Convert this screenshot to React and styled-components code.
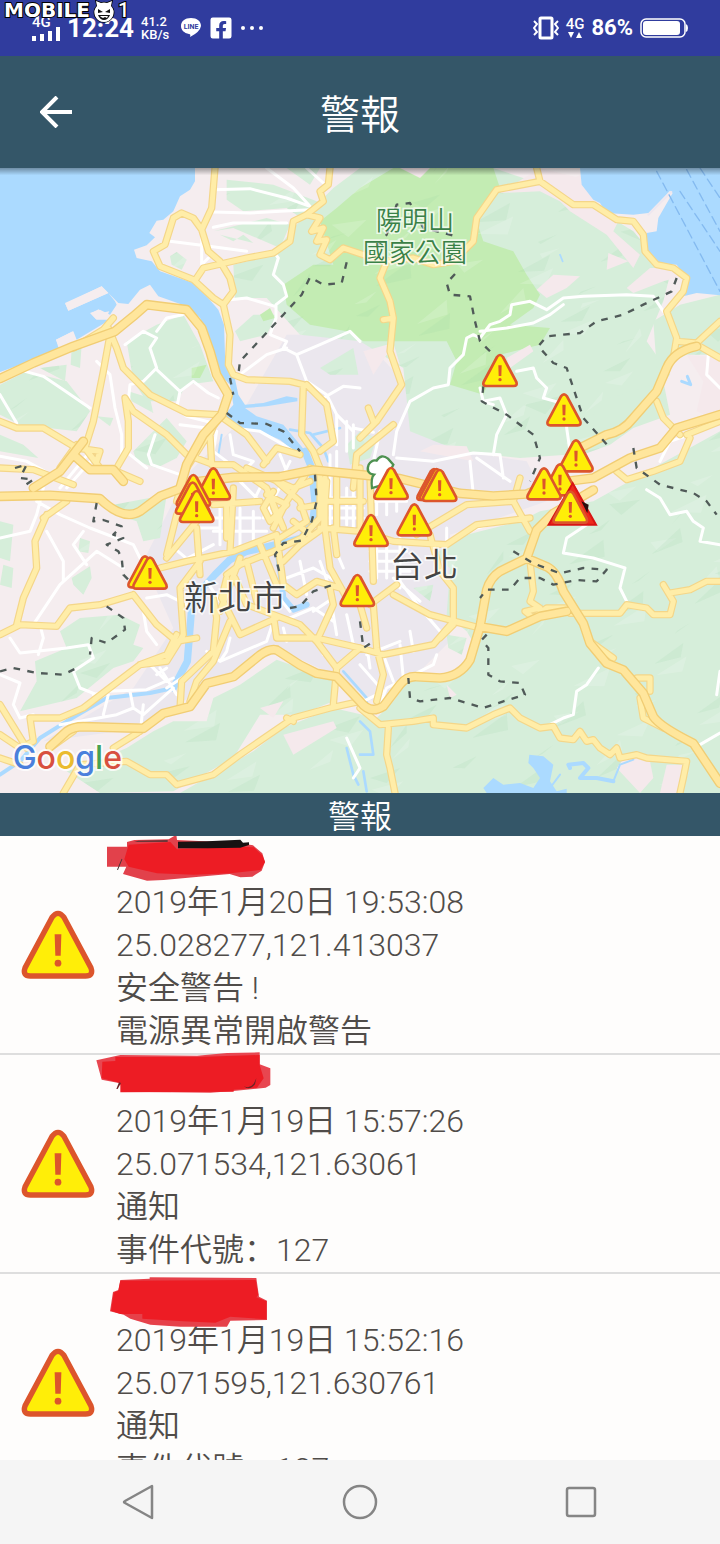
import React from "react";
import styled, { createGlobalStyle } from "styled-components";
import { FaFacebookSquare } from "react-icons/fa";

export default function App() {
  return (
    <Screen>
      <GlobalStyle />
      <StatusBar />
      <Header>
        <BackButton type="button" aria-label="Back">
          <svg width="32" height="32" viewBox="0 0 32 32">
            <path d="M17 1 L2 16 L17 31 M2 16 H32" fill="none" stroke="#fff" strokeWidth="4" />
          </svg>
        </BackButton>
        <Title>警報</Title>
      </Header>
      <MapArea>
        <CityMap />
      </MapArea>
      <SectionTitle>警報</SectionTitle>
      <AlertList>
        {alerts.map((alert) => (
          <AlertRow key={alert.date} {...alert} />
        ))}
      </AlertList>
      <NavBar>
        <NavButton type="button" aria-label="Back">
          <svg width="36" height="36" viewBox="0 0 36 36">
            <path d="M31 2 V34 L4 19 Q2 18 4 17 Z" {...navStroke} />
          </svg>
        </NavButton>
        <NavButton type="button" aria-label="Home">
          <svg width="36" height="36" viewBox="0 0 36 36">
            <circle cx="18" cy="18" r="16" {...navStroke} />
          </svg>
        </NavButton>
        <NavButton type="button" aria-label="Recent apps">
          <svg width="36" height="36" viewBox="0 0 36 36">
            <rect x="4" y="4" width="28" height="28" rx="2" {...navStroke} />
          </svg>
        </NavButton>
      </NavBar>
    </Screen>
  );
}

const navStroke = { fill: "none", stroke: "#858585", strokeWidth: 2.5, strokeLinejoin: "round" };

const alerts = [
  {
    date: "2019年1月20日 19:53:08",
    position: "25.028277,121.413037",
    message: "安全警告 !",
    detail: "電源異常開啟警告",
    marks: [
      ["M30 32 H90 V18 L112 12 L215 10 L238 -4 L240 12 L420 20 L468 28 L496 52 L504 78 L494 104 L466 122 L430 124 L398 114 L330 120 L200 132 L150 134 L78 114 L88 92 H30 Z", "#e2414b"],
      ["M95 26 L220 18 L240 40 L430 32 L470 34 L496 58 L504 78 L490 102 L400 112 L290 116 L180 112 L95 92 L82 70 Z", "#ed1c24"],
      ["M243 17 L330 16 L430 11 L438 20 L456 19 V27 L430 35 L330 37 H243 Z", "#171212"],
      ["M112 17 L124 14 L212 13 V17 Z M60 101 L74 68 L76 70 L63 102 Z", "#433"],
    ],
  },
  {
    date: "2019年1月19日 15:57:26",
    position: "25.071534,121.63061",
    message: "通知",
    detail: "事件代號：127",
    marks: [
      ["M-2 16 L70 0 L300 2 L390 -6 L488 -8 V28 L520 40 V90 L506 98 L410 108 L340 113 L90 110 L65 84 L14 74 Z", "#e84650"],
      ["M16 20 L55 18 V6 L300 6 L488 0 V30 L500 70 L480 98 L410 104 V110 L70 112 V84 L14 70 Z", "#ed1c24"],
      ["M58 102 L66 82 L72 84 L62 102 Z M440 92 Q456 110 474 88 L478 70 L470 86 Q456 104 440 92 Z", "#6b2326"],
    ],
  },
  {
    date: "2019年1月19日 15:52:16",
    position: "25.071595,121.630761",
    message: "通知",
    detail: "事件代號：127",
    marks: [
      ["M70 18 L158 14 V10 L478 12 L486 68 L510 80 V138 L400 140 L390 158 H250 L160 152 L100 134 L80 122 L39 112 L48 54 L64 48 Z", "#e6414a"],
      ["M70 20 L476 18 L484 62 L478 70 L508 82 V136 L400 128 L355 146 L260 142 L136 134 V120 L70 120 L42 110 L50 56 L64 50 Z", "#ed1c24"],
    ],
  },
];

function StatusBar() {
  return (
    <StatusWrap>
      <StatusGroup>
        <Network>
          <SmallLabel>4G</SmallLabel>
          <svg width="28" height="14" viewBox="0 0 28 14" fill="#fff">
            <rect x="0" y="9" width="4" height="5" />
            <rect x="8" y="7" width="4" height="7" />
            <rect x="16" y="4" width="4" height="10" />
            <rect x="24" y="0" width="4" height="14" />
          </svg>
        </Network>
        <Clock>12:24</Clock>
        <Rate>
          <span>41.2</span>
          <span>KB/s</span>
        </Rate>
        <LineIcon width="22" height="22" viewBox="0 0 22 22">
          <path
            d="M11 1 C5 1 1 4 1 9 C1 13 4 16 9 17 Q11 17 10 20 Q20 15 21 9 C21 4 17 1 11 1 Z"
            fill="#fff"
          />
          <text x="11" y="12" textAnchor="middle">
            LINE
          </text>
        </LineIcon>
        <FaFacebookSquare size={24} color="#fff" />
        <svg width="24" height="6" viewBox="0 0 24 6" fill="#fff">
          <circle cx="3" cy="3" r="2" />
          <circle cx="12" cy="3" r="2" />
          <circle cx="21" cy="3" r="2" />
        </svg>
      </StatusGroup>
      <StatusGroup>
        <svg width="26" height="24" viewBox="0 0 26 24" fill="none" stroke="#fff">
          <rect x="7" y="2" width="12" height="20" rx="1" strokeWidth="3" />
          <path d="M1 5 L4 8 L1 12 L4 16 L1 19 M25 5 L22 8 L25 12 L22 16 L25 19" strokeWidth="2" />
        </svg>
        <DataState>
          <SmallLabel>4G</SmallLabel>
          <svg width="16" height="8" viewBox="0 0 16 8" fill="#fff">
            <path d="M1 1 H7 L4 7 Z M9 7 H15 L12 1 Z" />
          </svg>
        </DataState>
        <Percent>86%</Percent>
        <svg width="48" height="20" viewBox="0 0 48 20">
          <rect x="1" y="1" width="44" height="18" rx="5" fill="none" stroke="#fff" strokeWidth="1.5" />
          <rect x="3" y="3" width="37" height="14" rx="3" fill="#fff" />
          <path d="M46 6 Q48 7 48 10 Q48 13 46 14 Z" fill="#fff" />
        </svg>
      </StatusGroup>
      <Watermark>
        <span>MOBILE</span>
        <svg width="24" height="24" viewBox="0 0 22 24">
          <path
            d="M4 6 L3 1 L8 3 Q11 2 14 3 L19 1 L18 6 Q22 10 20 16 Q17 22 11 22 Q5 22 2 16 Q0 10 4 6 Z"
            fill="#fff"
            stroke="#000"
            strokeWidth="1.5"
          />
          <path
            d="M5 9 L10 12 L5 13 Z M17 9 L12 12 L17 13 Z M5 15 H17 Q15 20 11 20 Q7 20 5 15 Z"
            fill="#111"
          />
          <path d="M7 16 H15 L14 18 L12 17 L10 18 L8 17 Z" fill="#fff" />
        </svg>
        <WatermarkDigit>1</WatermarkDigit>
      </Watermark>
    </StatusWrap>
  );
}

function AlertRow({ date, position, message, detail, marks }) {
  return (
    <Row>
      <IconCell>
        <svg width="76" height="70" viewBox="-56 -2 112 104">
          <WarningSign />
        </svg>
      </IconCell>
      <RowText>
        <NameLine>
          <Scribble viewBox="0 0 540 150">
            {marks.map(([d, fill]) => (
              <path key={d} d={d} fill={fill} />
            ))}
          </Scribble>
        </NameLine>
        <p>{date}</p>
        <p>{position}</p>
        <p>{message}</p>
        <p>{detail}</p>
      </RowText>
    </Row>
  );
}

function WarningSign() {
  return (
    <>
      <path
        d="M-9 9 Q0 -3 9 9 L49 84 Q53 96 41 96 H-41 Q-53 96 -49 84 Z"
        fill="#ffee08"
        stroke="#dc552c"
        strokeWidth="8"
        strokeLinejoin="round"
      />
      <path d="M-5 34 H5 L4 66 H-4 Z" fill="#dc552c" />
      <circle cx="0" cy="77" r="5" fill="#dc552c" />
    </>
  );
}

// map coordinates run over 2160 x 1875 units
const greens = [
  "M680 35 L820 50 L950 100 L1000 180 L960 190 L860 120 L730 130 L680 95 Z",
  "M860 0 H960 L930 50 Z",
  "M640 190 L800 150 L870 170 L840 240 L700 180 Z",
  "M510 265 L530 252 L560 275 L545 305 L515 290 Z",
  "M660 200 L700 220 L730 200 L760 225 Z",
  "M700 290 L820 260 L880 180 L1000 60 L1080 0 H1480 L1720 80 L1900 190 L2010 320 L1990 400 L1940 520 L2010 620 L1900 740 L1700 860 L1560 870 L1380 850 L1230 790 L1210 600 L1080 520 L900 500 L800 390 L705 390 Z",
  "M705 490 L760 440 L830 440 L800 500 L720 520 Z",
  "M960 600 L1060 540 L1075 620 L990 620 Z",
  "M380 520 L470 470 L550 440 L600 530 L640 640 L560 650 L530 700 L440 700 L400 640 Z",
  "M0 650 L80 610 L200 640 L270 730 L230 790 L60 770 L0 740 Z",
  "M120 600 L200 590 L195 640 Z M215 540 L245 530 L240 600 L212 590 Z",
  "M385 670 L450 690 L460 735 L395 700 Z M0 800 L70 830 L115 870 L0 850 Z",
  "M400 850 L500 750 L560 820 L530 870 L470 900 L410 880 Z",
  "M290 745 L340 750 L330 775 Z",
  "M340 1010 L500 980 L480 1110 L430 1120 L410 1060 L350 1040 Z",
  "M0 1060 L40 1070 L30 1180 L0 1170 Z M10 1190 L40 1200 L35 1260 L0 1250 Z",
  "M240 1110 L270 1120 L265 1155 L235 1150 Z M215 1230 L270 1195 L275 1230 L250 1280 L220 1250 Z",
  "M180 1390 L240 1350 L360 1340 L420 1370 L400 1430 L430 1440 L400 1480 L340 1500 L230 1590 L60 1630 L110 1540 L105 1480 L200 1440 Z",
  "M380 1740 L460 1690 L520 1660 L620 1660 L640 1590 L720 1550 L830 1475 L900 1500 L1000 1540 L1000 1600 L900 1640 L780 1640 L700 1770 L520 1870 L300 1875 L200 1810 L260 1790 Z",
  "M540 1875 L760 1750 L850 1680 L1000 1620 L1130 1650 L1180 1600 L1230 1530 L1350 1530 L1430 1440 L1400 1390 L1340 1340 L1350 1200 L1300 1160 L1400 1100 L1560 1060 L1620 1030 L1780 1000 L1960 900 L2160 790 V1875 Z",
  "M1960 460 L2040 410 L2160 380 V560 L2060 560 L1970 600 Z",
  "M1800 700 L1990 640 L2010 740 L1900 780 L1830 830 L1720 870 Z",
  "M1340 1400 L1400 1410 L1385 1460 L1345 1440 Z M1240 1260 L1300 1250 L1290 1300 Z",
  "M1040 830 L1080 790 L1130 810 L1110 870 L1050 890 Z",
];

const parks = [
  "M1010 120 L1080 60 L1180 0 H1480 L1500 60 L1430 160 L1450 220 L1540 250 L1580 320 L1620 380 L1600 420 L1530 470 L1650 480 L1620 530 L1500 560 L1450 680 L1350 650 L1370 580 L1340 520 H1090 L1040 490 L930 470 L860 410 L850 350 L940 290 L1000 290 L960 160 Z",
  "M780 440 L810 420 L825 450 L790 460 Z M575 600 L620 590 L600 630 L575 630 Z",
];

const pinks = [
  "M1200 0 H1290 L1260 30 Z",
  "M1500 75 L1620 0 L1740 30 L1700 110 L1620 70 Z",
  "M1740 20 L1800 110 L1860 150 L1840 190 L1920 260 L1900 300 L1820 200 L1710 130 L1650 70 Z",
  "M1610 365 L1660 320 L1740 325 L1700 360 L1640 390 Z",
  "M1825 255 L1885 280 L1820 305 Z M1880 360 L1950 300 L2010 300 L2060 320 L1990 340 L1900 375 Z",
  "M1090 550 L1180 525 L1200 590 L1160 560 L1120 620 Z",
  "M1520 570 L1590 530 L1600 550 L1530 600 Z",
  "M2060 560 L2160 570 V760 L2090 730 L2110 640 Z",
  "M1400 835 L1300 830 L1260 850 L1420 880 Z",
  "M1850 1800 L1880 1760 L1950 1780 L1960 1830 L1920 1875 Z M2000 1790 L2060 1790 L2030 1875 H1980 Z",
  "M780 1620 L850 1600 L820 1650 Z M850 1700 L1000 1660 L1010 1680 L880 1760 Z M1340 1550 L1370 1580 L1350 1590 Z",
];

const water = [
  "M0 0 H585 V40 L570 65 L540 85 L520 130 L490 155 L470 158 L448 195 L465 208 L440 232 L402 245 L410 270 L455 280 L480 310 L580 345 L620 385 L655 425 L672 470 L675 560 L700 610 L715 680 L735 710 L790 705 L860 685 L892 690 V700 L800 715 L735 720 L770 745 L850 770 L925 860 L900 865 L840 815 L780 790 L700 775 L670 745 L700 710 L690 650 L660 620 L650 580 L625 500 L600 450 L560 415 L475 385 L450 350 L420 365 L385 408 L355 405 L305 355 L150 430 L195 405 L205 428 L325 375 L345 400 L350 410 L330 440 L300 425 L270 435 L290 455 L330 455 L230 515 L220 490 L168 515 L175 538 L200 540 L0 612 Z",
  "M1740 0 H2160 V382 L2090 375 L2050 385 L2060 330 L2030 290 L1960 285 L1925 240 L1940 195 L1970 190 L1975 150 L2018 75 L2010 68 L1945 135 L1900 140 L1820 135 L1800 105 L1780 95 L1745 50 Z",
  "M1460 1875 L1450 1860 L1480 1830 L1510 1850 L1560 1845 L1600 1860 L1620 1830 L1600 1800 L1585 1785 L1588 1760 L1630 1765 L1660 1790 L1650 1840 L1670 1870 L1700 1862 V1875 Z",
];

const sandbars = "M195 405 L305 355 L325 375 L205 428 Z M168 515 L218 490 L222 508 L178 538 Z M272 436 L296 424 L306 434 L328 430 L318 450 L288 454 Z";

const rivers = [
  ["M915 850 L935 900 L945 1000 L940 1050 L905 1110 L850 1125 L740 1150 L690 1175 L645 1220 L600 1270 L575 1320 L562 1480 L520 1560", 22],
  ["M562 1390 L560 1490 L520 1560 L450 1575 L320 1590 L200 1660 L120 1710 L60 1780 L0 1820", 12],
  ["M830 1135 L840 1200 L850 1290 L880 1325 L920 1310", 18],
  ["M870 785 L930 795 L970 840 L985 880 M940 800 L1020 780", 8],
  ["M665 800 L655 860", 6],
  ["M1030 1510 L1100 1590 M1080 1660 L1110 1690 L1120 1760 L1080 1760", 8],
  ["M1650 1860 L1680 1820 M1840 1840 L1860 1790 L1900 1775", 6],
  ["M1710 1800 L1705 1790 L1750 1785 L1765 1800 L1740 1830 L1790 1830 L1840 1840", 12],
  ["M2045 640 L2072 650 L2062 625", 9],
  ["M1680 260 L1688 280 M1100 1600 L1120 1640", 5],
  ["M1040 1740 L1060 1820 L1075 1850 M1090 1810 L1100 1870", 8],
];

const white = [
  "M640 65 L750 62 L860 90 L930 115 L880 60 L800 0 M640 132 L750 135 L840 130 L930 125 M640 178 L700 165 L860 165",
  "M510 220 L605 232 L740 250 M605 195 V290 L625 270 M920 0 L970 45",
  "M820 250 L835 270 L820 320 L850 350 L860 385 L828 410 V450 L810 500 L860 520 L850 540 L890 560 L960 530 L1050 490 L1080 520",
  "M690 395 L740 390 L825 415 M720 620 L800 560 L860 540 M890 560 L920 640 L980 680 L1010 740 L1060 790 M970 690 L1030 655 L1080 660",
  "M375 530 L430 490 L470 510 L450 540 L470 600 L430 640 L390 650 L385 700 M470 490 L500 450 L548 440 M470 605 L540 670 L580 640 L625 675 L655 690 M540 670 L530 720 L560 745 L640 765",
  "M75 610 L130 625 L190 665 L270 720 M0 680 L50 765 M290 580 L330 620 L345 720 L365 800 V860 M465 800 L445 860 L455 890 L540 920 M390 860 L440 900",
  "M0 865 L80 880 L180 935 M0 1110 L90 1090 L110 1040 L130 960 M110 1000 L180 1040 L270 1080 L400 1130 L420 1170 M100 1370 L180 1250 L290 1150 L370 1200 M140 1090 L190 1180 V1240 M250 1090 L220 1130 L260 1190",
  "M30 1410 L60 1455 L200 1440 L265 1430 L280 1470 L220 1510 L240 1560 L290 1580 M120 1370 L130 1410 L115 1460 M0 1520 L60 1545 L40 1610 L60 1650 L100 1640",
  "M280 1580 L320 1570 L440 1565 L520 1530 M325 1580 L310 1640 M390 1570 L400 1620 L430 1640 L520 1560 M180 1670 L350 1640 L400 1620 M420 1700 L430 1610",
  "M150 920 L240 850 L260 830 M180 960 L270 850 M200 960 L280 870",
  "M540 770 L620 780 M700 780 L780 790 L850 830 L880 850 M650 790 L640 850 L680 880 M690 800 L700 860 L760 880 L720 920",
  "M440 1290 L500 1280 L560 1310 M430 1330 L440 1390 L470 1430 M510 1130 L570 1180 M545 1180 L640 1130",
  "M620 1450 L660 1480 L800 1420 L820 1360 M690 1410 L680 1450 L660 1480 M850 1380 L860 1420",
  "M1180 780 L1140 790 L1120 880 M1120 793 L1060 780 M1180 860 L1190 790 L1230 700 L1300 660 L1345 650 L1350 600 L1390 560 L1400 510 L1420 500 L1440 510 L1470 470 L1500 460 L1530 440 L1535 410 L1590 400 L1640 425 L1690 390 L1750 385 L1880 380 L1960 385 L1990 430 M1440 490 L1520 480 L1600 465 L1650 440 L1690 410",
  "M1440 660 L1450 700 L1500 690 L1520 740 L1490 800 L1480 860 M1445 700 L1480 710 M1550 610 L1600 600 L1610 630 L1640 660 L1630 690 L1700 710 V780 L1710 850",
  "M1190 870 L1300 880 L1420 855 L1500 860 L1510 930 M1410 880 L1420 980 M1430 870 L1530 940",
  "M2125 560 L2120 620 L2160 660 M2070 800 L2010 820 L1980 880",
  "M1760 1070 L1700 1110 L1690 1155 L1780 1170 L1860 1195 L1875 1200 L1860 1260 L1880 1300 M1940 965 L1980 990 L2010 1040 L2060 1030 L2080 1060 L2110 1080 L2100 1120 L2160 1130",
  "M1795 1500 L1760 1550 L1730 1570 L1720 1640 L1690 1650 L1650 1670 M2160 1510 L2150 1580 M2160 1695 L2100 1730",
  "M1120 1330 L1130 1400 M1200 1240 L1260 1320 L1320 1390 M1130 1630 L1160 1560 L1300 1490 L1310 1460 M1080 1490 L1150 1570 L1090 1600 M1200 1430 L1210 1530 M1230 1390 L1240 1450",
  "M1340 1080 V1130 L1430 1080 L1550 1050 M1180 1230 L1260 1300 M1040 1710 L1080 1800 L1060 1830",
];

// dense downtown street grid
const streets = [
  "M640 1050 H780 M640 1090 H800 M660 1010 V1130 M720 1020 V1140 M760 1030 V1130 M600 1080 H660",
  "M990 860 V1080 M1010 850 V1080 M1040 960 V1070 M1060 960 V1080 M980 990 H1080 M980 1020 H1090 M980 1050 H1090 M1010 740 V830 M1040 760 V850 M1060 770 V840",
  "M1130 940 V1040 M1160 950 V1040 M1190 960 V1030 M1100 1000 H1220 M1110 1150 H1220 M1110 1180 H1220 M1110 1210 H1230 M1130 1110 V1230 M1160 1110 V1230 M1200 1110 V1260",
  "M760 930 L860 1020 M720 940 L820 1040 M800 920 L760 1000 M860 920 L790 1050 M840 860 L860 910 M870 880 L850 920",
  "M860 1230 L940 1200 L1010 1240 M900 1180 L920 1280 M960 1180 L1000 1290 L940 1330 M830 1280 L870 1330 M1000 1130 L1030 1200 M870 1350 L940 1320 L1000 1360 M990 1280 L1010 1400",
  "M960 1420 L970 1460 M1040 1340 L1060 1430 M1100 1430 L1110 1500 M480 1500 L530 1580 M440 1480 L500 1540 M470 1520 L500 1500 M500 1560 L560 1520",
  "M1100 1460 L1200 1420 M1150 1460 L1180 1540 M1120 1310 L1080 1270 M620 1240 L660 1300",
];

const roads = [
  "M645 0 L635 120 L605 185 L625 250 L660 280 L690 330 L700 370 L670 410 L690 500 L685 590 L700 620 L740 635 L870 640 L910 650 L905 800 L940 850 L960 900 V1050 L905 1110 L820 1150 L720 1190 L680 1220",
  "M605 185 L580 150 L545 135 L520 150 L495 230 L460 250 L480 295 L580 335 L640 390 L670 410 M590 330 L610 300 L740 270 L820 255 L870 220 L880 160 L920 140 L970 100 L960 70 L985 50 L990 0",
  "M920 140 L960 150 L935 190 L970 180 L950 220 L980 215 L960 260 L990 275 L1030 240 L1090 260 L1150 280 L1240 270 L1300 290 L1360 280 L1420 220 L1430 150 L1490 65 L1620 40 L1720 110 L1780 110 L1850 155 L1900 160 L1930 200 L1935 250 L1970 290 L2020 300 L2060 330 L2050 370 L2000 430 L2030 510 L2020 570",
  "M1620 40 L1610 0 M2030 520 L2090 525 L2160 460 M2090 530 L2160 570",
  "M1160 280 L1140 330 L1170 400 L1180 450 L1170 550 L1205 650 L1130 760 L1080 810 M1120 760 L1105 720 M1180 450 L1150 455",
  "M1970 700 L1990 750 L2040 800 M2070 810 L2040 880 L1960 910 L1880 935 L1850 910 M2160 760 L2060 800",
  "M325 480 L350 540 L370 600 L450 680 L560 735 L655 740 L740 800 L800 880 M330 500 L310 610 L280 760 L255 840 L300 900 M350 900 L385 840 V760 L375 690 L400 730 L500 800 L560 860 L640 890 L700 890 L800 960 L830 1040",
  "M0 760 L50 780 L130 780 L230 840 L300 850 L290 880 M180 900 L230 830 M0 900 L100 905 L220 950 M350 910 L420 940",
  "M340 450 L310 485 L220 540",
  "M655 740 L630 800 L635 890 M650 760 L560 900 L530 1000 M920 650 L980 710 L1000 820 L960 850 M790 890 L830 840 L900 860 M1060 960 L1070 860 L1180 770",
  "M140 1040 L105 1120 L110 1200 L70 1290 L50 1370 M0 1400 L60 1370 L170 1375 L210 1320 L300 1310 L400 1280 M130 1050 L200 1000",
  "M400 1280 L470 1370 L530 1420 L590 1410 M530 1040 L500 1160 M590 1080 L600 1220 M480 1200 L560 1180 L700 1150 L830 1100 M500 1170 L590 1060 M600 1180 L540 1260 L550 1400 L500 1480 L420 1490",
  "M90 1650 H180 L250 1620 L420 1490 L500 1460 L530 1400 M90 1650 L100 1720 L60 1740 L0 1700 M0 1610 L80 1740 M150 1740 L220 1690 M0 1770 L60 1790",
  "M540 1620 L545 1540 L640 1450 L650 1350 L640 1290 M570 1600 L590 1540 L640 1480 L690 1360 M665 1290 L720 1400 L830 1350",
  "M800 960 L850 1080 M700 960 L690 1150 M640 1010 L780 1000 M830 940 L900 1000 L920 1060 L840 1110 M740 900 L880 960 L930 940 M930 900 L860 1000 L820 1080",
  "M705 1230 L740 1310 L820 1340 L830 1410 H950 L1080 1440 L1150 1460 L1300 1430 L1360 1360 L1440 1380 M820 1340 L900 1370 L950 1420 L1000 1310 L990 1260",
  "M830 1100 L850 1250 L890 1280 L950 1240 L1020 1260 M780 1130 L830 1250 M850 1180 L900 1130 L970 1080 L980 940",
  "M960 1080 L1080 1090 L1180 1120 L1340 1130 L1430 1070 L1590 1050 M975 1080 L990 1200 L1040 1290 M1000 1080 L1010 1160 M1110 930 L1120 1240",
  "M1110 1310 L1190 1250 M1180 1280 L1290 1340 L1440 1380 M1290 1100 L1320 1210 L1360 1260 L1360 1370 L1320 1410 M1120 1310 L1130 1440 L1150 1520 L1130 1600 M1080 1310 L1100 1380 M1250 1100 L1400 1010 L1540 1000 L1590 1090",
  "M1080 1620 L1140 1670 L1240 1660 L1300 1650 L1300 1670 L1400 1680 L1480 1640 L1530 1620 L1560 1650 L1620 1680 L1660 1675 L1680 1710 L1720 1715 L1740 1690 L1760 1720 L1780 1715 L1800 1740 L1830 1760 L1850 1740 L1860 1770 L1910 1760 L1940 1770 L2060 1780 L2050 1830 L2040 1875 M1165 1680 L1160 1760 L1170 1800 L1185 1875",
  "M1590 1180 L1600 1270 L1590 1300 L1620 1320 L1575 1330 L1600 1350 L1640 1320 H1700 M1710 1336 H1860 L1880 1310 L1940 1320 L1960 1340 L2010 1340 L2020 1300 L1990 1250 M2010 1275 L2070 1265 L2120 1240 H2160",
  "M1770 1420 L1840 1470 M1920 1590 L1930 1650 L1990 1680 M1910 1530 L1950 1530 L1950 1570",
  "M190 1875 L240 1790 L380 1780 L450 1820 L500 1820 L530 1850 L640 1820 L720 1760 L880 1650 L990 1620 L1080 1600 M1000 1610 L1010 1500 L950 1420",
  "M340 1740 L420 1690 M1540 1000 L1560 930 M880 1660 L860 1650 M1010 1500 L1080 1440",
  "M680 1230 L665 1290 M680 1010 V1110 M740 1180 L770 1300 M720 1170 L660 1330 M820 970 L790 1020 L810 1060 L860 1010 L800 980",
  "M930 1100 L880 1060 M960 1010 L900 1020 M975 930 V1080 M1010 930 V1080 M1080 900 V1090 M980 1000 H1090",
];

const highways = [
  "M0 632 L100 585 L220 535 L345 490 L400 445 L440 410 L560 425 L605 480 L630 550 L650 620 L685 680 L665 740 L610 800 L560 890 L540 960",
  "M0 985 L150 982 L300 992 Q370 1060 420 1030 L480 985 L600 940 L700 928 L840 926 L940 906 L1040 916 L1200 932 L1380 976 L1480 984 L1580 978 L1660 945 L1780 930 L1890 870 L1980 840 L2030 780 L2160 740",
  "M150 1736 L200 1690 Q220 1676 250 1676 L430 1681 L490 1636 L570 1616 L620 1546 L700 1526 L780 1461 Q810 1440 830 1446 L900 1491 L950 1516 L1010 1526 L1080 1600 Q1110 1640 1150 1615 L1200 1550 Q1220 1524 1250 1526 L1320 1530 Q1380 1526 1410 1476 L1440 1376 L1460 1266 Q1470 1230 1500 1210 L1580 1171 L1610 1086 L1660 1036 L1780 966",
  "M1580 1171 L1640 1196 Q1670 1210 1690 1270 L1750 1366 L1770 1426 L1820 1486 L1870 1506 L1930 1576 L1960 1646 Q1980 1676 2080 1726 L2160 1846",
  "M1720 850 L1820 800 Q1870 790 1900 750 L1970 670 L2000 600 Q2020 550 2090 535",
  "M1440 1376 L1520 1390 L1620 1345 L1700 1330",
  "M100 960 L180 910 L250 820 M220 860 L270 905 L340 905 L370 940",
];

const borders =
  "M1040 283 L1025 345 L970 350 L930 328 L905 380 L850 440 L720 580 L715 620 M690 630 L700 680 M680 735 L720 765 L800 768 L850 790 L900 850 M945 920 L950 1000 L935 1060 L905 1118 L850 1125 L825 1160 L840 1220 M870 1320 L900 1315 L940 1270 L1000 1250 M1365 318 L1340 345 L1350 380 L1410 385 L1425 460 L1440 520 L1480 560 M1450 655 L1445 700 L1520 740 L1600 800 L1620 870 L1590 940 M2030 330 L2015 370 L1930 410 L1870 440 L1790 460 L1740 495 L1640 505 L1615 535 L1660 585 L1700 600 L1720 660 L1750 750 L1830 840 M1900 840 L1910 900 L1980 950 L2080 975 L2120 1000 L2150 1040 M290 1005 L280 1060 L310 1056 L365 1075 L340 1100 L370 1110 L320 1130 L355 1150 L365 1170 L370 1220 L390 1240 M320 1315 L370 1350 L375 1385 L320 1425 L275 1410 L270 1460 M0 1510 L40 1500 L110 1515 L190 1520 L230 1500 M45 900 L80 890 L60 930 L100 935 L70 955 M1130 235 L1160 200 L1190 110 L1230 105 L1270 180 L1370 205 M1540 1150 L1600 1186 L1680 1216 L1750 1200 L1820 1205 L1790 1240 L1730 1236 L1660 1250 L1620 1230 L1560 1230 L1530 1265 L1460 1265 L1440 1290 M1460 1400 L1445 1416 L1465 1440 L1465 1520 L1500 1540 L1560 1545 L1575 1580 L1510 1600 L1450 1620 L1350 1590 L1260 1600 L1230 1590 L1225 1530 M1080 1360 L1090 1440 L1120 1420";

const ferry = "M1970 10 L2160 370 M2060 5 L2160 190 M2040 70 L2160 250 M2100 0 L2160 90";

const pins = [
  [1500, 558], [1692, 676], [1728, 814], [1680, 886], [1632, 898],
  [640, 898], [580, 918], [578, 941], [590, 966],
  [435, 1162], [450, 1166], [1173, 897],
  [1302, 900], [1310, 900], [1319, 903],
  [1243, 1006], [1113, 1038], [1072, 1218],
];

// soft relief triangles, clipped to the green areas
const facets = Array.from({ length: 300 }, (_, i) => {
  const x = (i * 397) % 2160;
  const y = (i * 811) % 1875;
  const a = 40 + ((i * 53) % 70);
  const b = 10 + ((i * 31) % 70);
  return `M${x} ${y} l${a} ${-b} l${b - 70} ${a / 2} Z`;
});

function CityMap() {
  return (
    <MapSvg viewBox="0 0 2160 1875" preserveAspectRatio="xMidYMid slice">
      <defs>
        <clipPath id="land">
          {greens.map((d) => (
            <path key={d} d={d} />
          ))}
        </clipPath>
        <linearGradient id="shade" x1="0" y1="0" x2="0" y2="1">
          <stop offset="0" stopColor="#000" stopOpacity="0.35" />
          <stop offset="1" stopColor="#000" stopOpacity="0" />
        </linearGradient>
      </defs>
      <rect width="2160" height="1875" fill="#f5edef" />
      <path
        d="M700 780 L860 500 L1080 500 L1210 640 L1380 850 L1580 880 L1640 1000 L1350 1100 L1350 1420 L1150 1620 L1000 1520 L830 1440 L640 1540 L430 1680 L130 1720 L400 1560 L520 1380 L430 1180 L560 920 Z"
        fill="#ebe7ee"
      />
      <g fill="#d6eeda">
        {greens.map((d) => (
          <path key={d} d={d} />
        ))}
      </g>
      <g fill="#c3ecb3">
        {parks.map((d) => (
          <path key={d} d={d} />
        ))}
      </g>
      <g clipPath="url(#land)">
        {facets.map((d, i) => (
          <path key={d} d={d} fill={i % 2 ? "#fff" : "#8fcea0"} opacity={i % 2 ? 0.16 : 0.12} />
        ))}
      </g>
      <g fill="#f5e9ec">
        {pinks.map((d) => (
          <path key={d} d={d} />
        ))}
      </g>
      <g fill="#abdaff">
        {water.map((d) => (
          <path key={d} d={d} />
        ))}
      </g>
      <path d={sandbars} fill="#f5edef" />
      <g fill="none" strokeLinejoin="round" strokeLinecap="round">
        <path d="M1945 140 L2014 72" stroke="#eee7ef" strokeWidth="6" />
        {rivers.map(([d, width]) => (
          <path key={d} d={d} stroke="#abdaff" strokeWidth={width} />
        ))}
        <path d={ferry} stroke="#84baf0" strokeWidth="4" strokeDasharray="26 14" />
        <path d={white.join(" ")} stroke="#fff" strokeWidth="9" />
        <path d={streets.join(" ")} stroke="#fff" strokeWidth="9" />
        <path d={roads.join(" ")} stroke="#f4d689" strokeWidth="22" />
        <path d={roads.join(" ")} stroke="#ffeda8" strokeWidth="15" />
        <path d={highways.join(" ")} stroke="#f1cd74" strokeWidth="29" />
        <path d={highways.join(" ")} stroke="#ffe69c" strokeWidth="21" />
        <path d={borders} stroke="#505a58" strokeWidth="7" strokeDasharray="20 22" strokeLinecap="butt" />
      </g>
      <g fill="#fff" stroke="#4d9150" strokeWidth="7">
        <path d="M1116 960 Q1112 930 1122 920 Q1096 916 1106 890 Q1116 874 1130 878 Q1144 856 1164 872 L1180 890 L1150 950 Z" />
      </g>
      <MapLabel x="1245" y="187" $size={78} $color="#3a8147" textAnchor="middle">
        陽明山
      </MapLabel>
      <MapLabel x="1245" y="282" $size={78} $color="#3a8147" textAnchor="middle">
        國家公園
      </MapLabel>
      <MapLabel x="552" y="1325" $size={102} $color="#444">
        新北市
      </MapLabel>
      <MapLabel x="1170" y="1228" $size={102} $color="#444">
        台北
      </MapLabel>
      {pins.map(([x, y]) => (
        <g key={`${x}-${y}`} transform={`translate(${x} ${y})`}>
          <WarningSign />
        </g>
      ))}
      <path d="M1718 946 L1788 1070 H1646 Z" fill="#ee2a1c" stroke="#d81414" strokeWidth="6" />
      <path d="M1744 1000 L1766 1010 L1762 1036 Z" fill="#2a0d0d" />
      <g transform="translate(1711 968)">
        <WarningSign />
      </g>
      <GoogleMark x="38" y="1804">
        <tspan fill="#4a80dc">G</tspan>
        <tspan fill="#d8503f">o</tspan>
        <tspan fill="#eabb30">o</tspan>
        <tspan fill="#4a80dc">g</tspan>
        <tspan fill="#46a254">l</tspan>
        <tspan fill="#d8503f">e</tspan>
      </GoogleMark>
      <rect width="2160" height="22" fill="url(#shade)" />
    </MapSvg>
  );
}

const GlobalStyle = createGlobalStyle`
  body {
    margin: 0;
    background: #fefdfc;
  }
  * {
    box-sizing: border-box;
  }
  p, h1, h2, ul {
    margin: 0;
    padding: 0;
    font-weight: 350;
  }
  svg {
    display: block;
    flex: none;
  }
`;

const Screen = styled.div`
  display: flex;
  flex-direction: column;
  height: 100vh;
  overflow: hidden;
  font-family: Roboto, "Noto Sans CJK SC", sans-serif;
`;
const StatusWrap = styled.div`
  position: relative;
  flex: none;
  display: flex;
  justify-content: space-between;
  align-items: center;
  height: 56px;
  padding: 0 32px;
  background: #303c9e;
  color: #fff;
`;
const StatusGroup = styled.div`
  display: flex;
  align-items: center;
  gap: 7px;
`;
const Network = styled.div`
  display: flex;
  flex-direction: column;
  padding-top: 2px;
  span {
    line-height: 10px;
  }
`;
const SmallLabel = styled.span`
  font-size: 15px;
  line-height: 14px;
  font-weight: 500;
`;
const Clock = styled.span`
  font-size: 26px;
  line-height: 32px;
  font-weight: 700;
`;
const Rate = styled.span`
  display: flex;
  flex-direction: column;
  padding-right: 4px;
  font-size: 13px;
  line-height: 13px;
  font-weight: 500;
`;
const LineIcon = styled.svg`
  text {
    font: 700 7px Roboto, sans-serif;
    fill: #303c9e;
  }
`;
const DataState = styled.div`
  display: flex;
  flex-direction: column;
  align-items: center;
`;
const Percent = styled.span`
  font-size: 22px;
  line-height: 32px;
  font-weight: 700;
`;
const Watermark = styled.div`
  position: absolute;
  top: 0;
  left: 4px;
  display: flex;
  align-items: flex-start;
  gap: 2px;
  color: #fff;
  font-family: "DejaVu Sans", sans-serif;
  font-size: 20px;
  line-height: 20px;
  font-weight: 700;
  -webkit-text-stroke: 2px #000;
  paint-order: stroke fill;
`;
const WatermarkDigit = styled.span`
  font-family: Roboto, sans-serif;
  font-weight: 500;
`;

const Header = styled.header`
  position: relative;
  flex: none;
  display: flex;
  align-items: center;
  justify-content: center;
  height: 112px;
  background: #345668;
  color: #fff;
`;
const BackButton = styled.button`
  position: absolute;
  left: 24px;
  padding: 16px;
  border: 0;
  background: none;
`;
const Title = styled.h1`
  padding-top: 8px;
  font-size: 40px;
  line-height: 56px;
`;

const MapArea = styled.div`
  flex: none;
  width: 100%;
  aspect-ratio: 720 / 625;
`;
const MapSvg = styled.svg`
  width: 100%;
  height: 100%;
`;
const MapLabel = styled.text`
  font-family: "Noto Sans CJK TC", sans-serif;
  font-size: ${({ $size }) => $size}px;
  font-weight: 350;
  fill: ${({ $color }) => $color};
  stroke: rgba(255, 255, 255, 0.7);
  stroke-width: 10px;
  paint-order: stroke;
`;
const GoogleMark = styled.text`
  font-family: Inter, sans-serif;
  font-size: 96px;
  font-weight: 500;
  stroke: rgba(255, 255, 255, 0.8);
  stroke-width: 12px;
  paint-order: stroke;
`;

const SectionTitle = styled.h2`
  flex: none;
  padding-top: 5px;
  background: #345668;
  color: #fff;
  font-size: 32px;
  line-height: 38px;
  text-align: center;
`;
const AlertList = styled.ul`
  flex: 1;
  min-height: 0;
  overflow: hidden;
  list-style: none;
  background: #fefdfc;
`;
const Row = styled.li`
  display: flex;
  align-items: center;
  border-bottom: 2px solid #dedede;
`;
const IconCell = styled.div`
  flex: none;
  width: 116px;
  padding-left: 20px;
`;
const RowText = styled.div`
  flex: 1;
  padding-top: 2px;
  color: #504c49;
  font-size: 32px;
  line-height: 43px;
  white-space: nowrap;
`;
const NameLine = styled.div`
  position: relative;
  height: 43px;
`;
const Scribble = styled.svg`
  position: absolute;
  top: -2px;
  left: -19px;
  width: 180px;
  height: 50px;
  overflow: visible;
`;

const NavBar = styled.nav`
  flex: none;
  display: flex;
  justify-content: space-around;
  align-items: center;
  height: 84px;
  padding: 0 28px;
  background: #f5f5f5;
`;
const NavButton = styled.button`
  padding: 12px;
  border: 0;
  background: none;
`;
